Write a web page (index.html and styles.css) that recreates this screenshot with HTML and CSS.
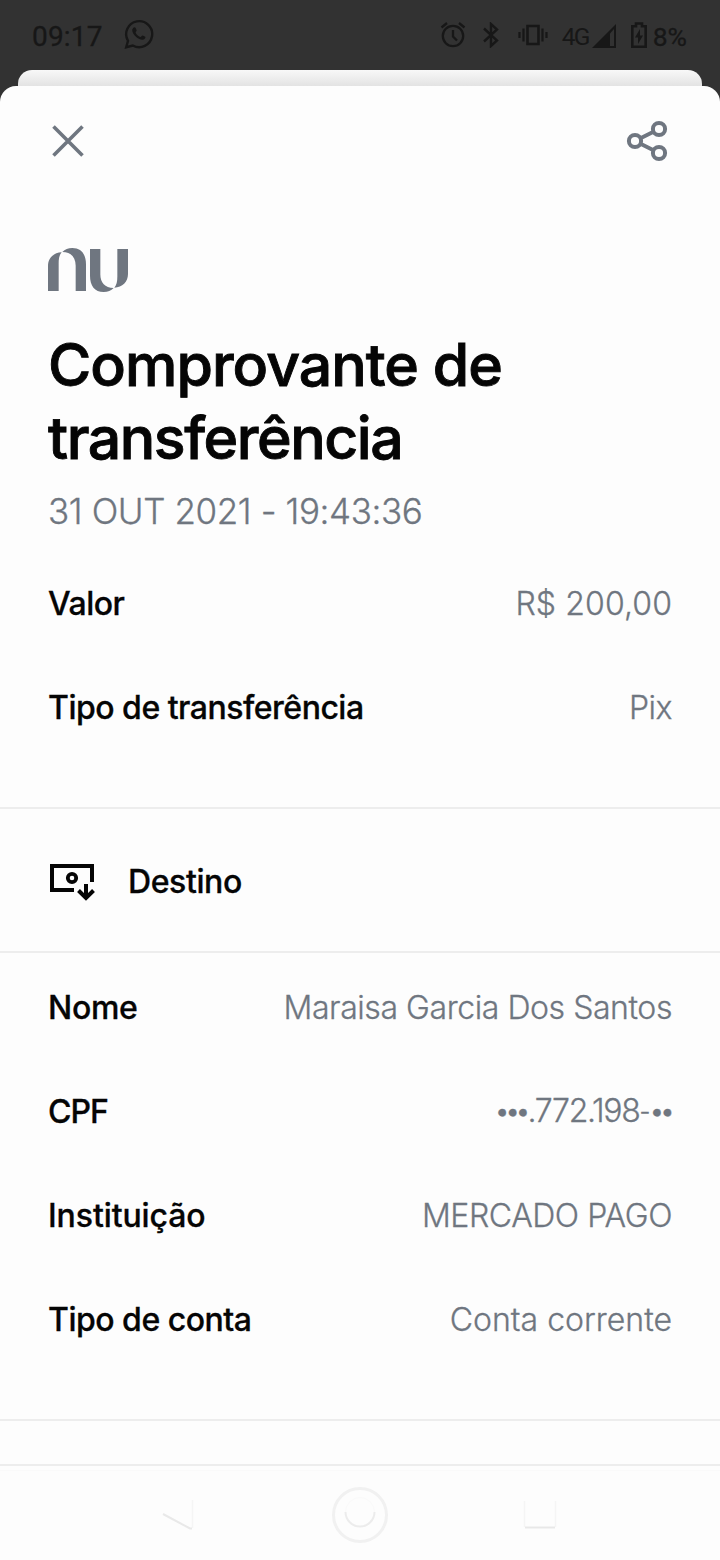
FILE: index.html
```html
<!DOCTYPE html>
<html lang="pt-BR">
<head>
<meta charset="utf-8">
<title>Comprovante de transferência</title>
<link rel="stylesheet" href="styles.css">
</head>
<body>
<div class="screen">
  <header class="status">
    <div class="status-left">
      <span class="clock">09:17</span>
      <svg class="whatsapp" width="30" height="32" viewBox="0 0 30 32" fill="none" stroke="#171717" stroke-width="2.4"><path d="M2.2 28.2 4 21.8A13 13 0 1 1 8.8 26.5Z"/><path d="M9 9.300c.8-1.500 2.200-1.500 2.800 0l.8 1.900c.3.900-1.300 1.600-.9 2.500.9 2 2.500 3.500 4.600 4.300.9.300 1.500-1.800 2.500-1.400l2 1c1.600.8-.1 3-1.800 3.200-4.600.500-11.200-5.600-10.800-10.200Z" fill="#171717" stroke="none"/></svg>
    </div>
    <div class="status-right">
      <svg class="alarm" width="26" height="26" viewBox="0 0 26 26" fill="none" stroke="#171717" stroke-width="2.300"><circle cx="13" cy="14" r="10.200"/><path d="M1.500 5.500 7 1M24.500 5.500 19 1M13 8v6.500l4 4"/></svg>
      <svg class="bluetooth" width="18" height="26" viewBox="0 0 18 26" fill="none" stroke="#171717" stroke-width="2.400"><path d="M2 6.500 15 18.500 9 24V2l6 5.500L2 19.500"/></svg>
      <svg class="vibrate" width="30" height="24" viewBox="0 0 30 24" fill="none" stroke="#171717"><path d="M9.500 3h11v18h-11z" stroke-width="2.600"/><path d="M5.500 5.500v13M24.500 5.500v13M1.500 9v6M28.500 9v6" stroke-width="2.200"/></svg>
      <span class="network">4G</span>
      <svg class="signal" width="26" height="26" viewBox="0 0 26 26"><path d="M1 25 25 1v24Z" fill="#171717"/><path d="M19 10.500 23 6v17h-4Z" fill="#323232"/></svg>
      <svg class="battery" width="16" height="26" viewBox="0 0 16 26" fill="none" stroke="#171717" stroke-width="2.600"><path d="M1.300 4.300H5V1.500h6v2.800h3.700v20.400H1.300Z"/><path d="m9 7-5 8.500h3V22l5-8.500H9Z" fill="#171717" stroke="none"/></svg>
      <span class="charge">8%</span>
    </div>
  </header>
  <div class="sheet-behind"></div>
  <main class="sheet">
    <div class="toolbar">
      <svg width="32" height="32" viewBox="0 0 32 32" fill="none" stroke="#6f7680" stroke-width="3.600"><path d="m1.500 1.500 29 29M30.500 1.500l-29 29"/></svg>
      <svg width="42" height="42" viewBox="0 0 42 42" fill="none" stroke="#6f7680" stroke-width="4"><circle cx="9" cy="21" r="6.100"/><circle cx="33" cy="9" r="6.100"/><circle cx="33" cy="33" r="6.100"/><path d="m14.500 18.200 13-6.500M14.500 23.800l13 6.500"/></svg>
    </div>
    <section class="summary">
      <svg class="logo" width="80" height="44" viewBox="54 414 240 132" fill="#6f7680"><path d="M54 543V468C54 444 71 428 95 427C88 435 86 445 86 461V543Z"/><path d="M97 426C105 418 114 414 127 414C154 414 168 433 168 463V543H137V467C137 442 123 426 97 426Z"/><path d="M294 417V492C294 516 277 532 253 533C260 525 262 515 262 499V417Z"/><path d="M251 534C243 542 234 546 221 546C194 546 180 527 180 497V417H211V493C211 518 225 534 251 534Z"/></svg>
      <h1 class="title"><span class="title-first">Comprovante de</span><br><span class="title-second">transferência</span></h1>
      <p class="date">31 OUT 2021 - 19:43:36</p>
    </section>
    <dl class="rows">
      <div class="row"><dt>Valor</dt><dd class="amount">R$ 200,00</dd></div>
      <div class="row"><dt class="kind">Tipo de transferência</dt><dd class="pix">Pix</dd></div>
    </dl>
    <div class="section-head">
      <svg width="48" height="40" viewBox="0 0 48 40" fill="none" stroke="#050505" stroke-width="4"><path d="M44 20V4H4v24h22"/><circle cx="24" cy="16" r="4.200" stroke-width="3.800"/><path d="M38 22v15M30.500 28.500 38 36l7.500-7.500"/></svg>
      <h2 class="section-title">Destino</h2>
    </div>
    <dl class="rows rows-target">
      <div class="row"><dt class="name-label">Nome</dt><dd class="name">Maraisa Garcia Dos Santos</dd></div>
      <div class="row"><dt class="cpf-label">CPF</dt><dd class="cpf"><span class="mask mask-start">•••</span>.772.198<span class="hyphen">-</span><span class="mask mask-end">••</span></dd></div>
      <div class="row"><dt class="bank-label">Instituição</dt><dd class="bank">MERCADO PAGO</dd></div>
      <div class="row"><dt class="account-label">Tipo de conta</dt><dd class="account">Conta corrente</dd></div>
    </dl>
    <div class="spacer"></div>
  </main>
  <nav class="navbar">
    <svg width="720" height="94" viewBox="0 0 720 94" fill="none"><path d="M0 4.500H720" stroke="#fafafa"/><path d="M192.500 34v28" stroke="#f5f5f5" stroke-width="1.500"/><path d="m163 48 27 14.500h2" stroke="#e9e9e9" stroke-width="2"/><circle cx="360" cy="49" r="26.500" stroke="#f1f1f1" stroke-width="3"/><circle cx="360" cy="46" r="14.500" stroke="#fafafa"/><path d="M345.500 46a14.500 14.500 0 0 0 29 0" stroke="#ececec" stroke-width="2"/><path d="M524.500 35v26M555.500 35v26" stroke="#f5f5f5" stroke-width="1.500"/><path d="M525 61.500h30" stroke="#e8e8e8" stroke-width="2"/></svg>
  </nav>
</div>
</body>
</html>
```
FILE: styles.css
```css
* { box-sizing: border-box; }
body { margin: 0; background: #323232; font-family: Inter, "Liberation Sans", sans-serif; }
h1, h2, p, dl, dd { margin: 0; }
svg { display: block; flex: none; }
.screen { width: 720px; height: 1560px; display: flex; flex-direction: column; overflow: hidden; background: #323232; }
.status { height: 70px; padding: 0 33px 0 32px; display: flex; justify-content: space-between; color: #171717; font-family: Roboto, sans-serif; }
.status-left, .status-right { display: flex; align-items: center; height: 72px; }
.status-right { height: 70px; }
.clock { font-size: 28px; letter-spacing: 0.2px; -webkit-text-stroke: 0.3px; }
.whatsapp { margin: -2px 0 0 21px; }
.bluetooth { margin-left: 16px; }
.vibrate { margin-left: 18px; }
.network { margin: 2px 0 0 14px; font-size: 24.500px; letter-spacing: -1.800px; }
.signal { margin: 2px 0 0 2px; }
.battery { margin-left: 14px; }
.charge { margin: 3px 0 0 6px; font-size: 26.500px; letter-spacing: 0; -webkit-text-stroke: 0.3px; }
.sheet-behind { height: 16px; flex: none; margin: 0 18px; border-radius: 14px 14px 0 0; background: linear-gradient(#f8f8f8, #e3e3e3); }
.sheet { height: 1378px; flex: none; display: flex; flex-direction: column; border-radius: 16px 16px 0 0; background: #fdfdfd; color: #050505; }
.toolbar { height: 110px; flex: none; padding: 0 52px; display: flex; justify-content: space-between; align-items: center; }
.summary { height: 356px; flex: none; padding: 52px 48px 0; }
.title { margin-top: 36px; height: 144px; font-size: 59px; line-height: 73px; font-weight: 500; -webkit-text-stroke: 0.9px; white-space: nowrap; }
.title-first { letter-spacing: -0.970px; }
.title-second { letter-spacing: -1.450px; }
.date { margin-top: 17px; font-size: 35px; line-height: 44px; font-weight: 300; letter-spacing: -0.400px; -webkit-text-stroke: 0.3px; color: #6f7680; white-space: nowrap; }
.rows { height: 255px; flex: none; padding: 0 48px; display: flex; flex-direction: column; }
.row { height: 104px; flex: none; display: flex; justify-content: space-between; align-items: center; font-size: 32px; line-height: 40px; white-space: nowrap; }
dt { font-weight: 500; letter-spacing: -0.500px; -webkit-text-stroke: 0.3px; }
dd { font-weight: 300; color: #6f7680; letter-spacing: -0.500px; -webkit-text-stroke: 0.3px; }
.amount { letter-spacing: 0.100px; }
.name { letter-spacing: -0.430px; }
.name-label { letter-spacing: -0.300px; }
.cpf { letter-spacing: -1.300px; }
.cpf-label { letter-spacing: -1px; }
.bank { letter-spacing: -0.430px; }
.bank-label { letter-spacing: -0.100px; }
.account { letter-spacing: 0; }
.mask { position: relative; top: -1px; font-size: 28px; letter-spacing: -5.300px; }
.mask-start { margin-right: 2px; }
.mask-end { margin-right: 2px; }
.hyphen { position: relative; top: -2px; font-size: 24px; }
.section-head { height: 146px; flex: none; padding: 2px 48px 0; border: solid #ededed; border-width: 2px 0; display: flex; align-items: center; gap: 32px; }
.section-head svg { margin-top: 2px; }
.section-title { font-size: 32px; font-weight: 500; letter-spacing: -0.400px; -webkit-text-stroke: 0.3px; }
.rows-target { height: 466px; padding-top: 3px; }
.spacer { flex: 1; border-top: 2px solid #ededed; }
.navbar { height: 96px; flex: none; border-top: 2px solid #ededed; background: #fdfdfd; }
```
